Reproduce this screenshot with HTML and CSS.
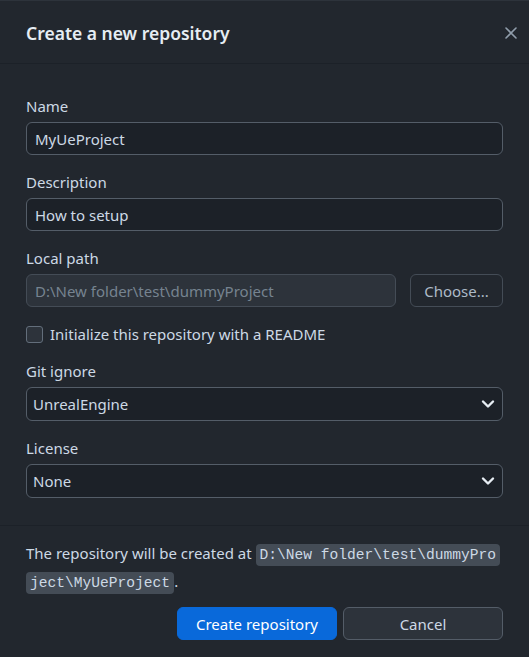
FILE: index.html
```html
<!DOCTYPE html>
<html lang="en">
<head>
  <meta charset="UTF-8" />
  <meta name="viewport" content="width=device-width, initial-scale=1.0"/>
  <title>Create a new repository</title>
  <link rel="stylesheet" href="styles.css">
</head>
<body>
  <div class="dialog">
    <div class="dialog-header">
      <h1>Create a new repository</h1>
      <button class="close" aria-label="Close">
        <svg width="12" height="12" viewBox="0 0 12 12">
          <path d="M1 1 L11 11 M11 1 L1 11" stroke="currentColor" stroke-width="1.6" stroke-linecap="round"/>
        </svg>
      </button>
    </div>

    <div class="dialog-body">
      <div class="field">
        <label for="name">Name</label>
        <input id="name" class="text-input" type="text" value="MyUeProject">
      </div>

      <div class="field">
        <label for="desc">Description</label>
        <input id="desc" class="text-input" type="text" value="How to setup">
      </div>

      <div class="field">
        <label for="path">Local path</label>
        <div class="path-row">
          <input id="path" class="text-input disabled" type="text" value="D:\New folder\test\dummyProject" disabled>
          <button class="btn choose">Choose...</button>
        </div>
      </div>

      <label class="check-row">
        <span class="checkbox"></span>
        Initialize this repository with a README
      </label>

      <div class="field">
        <label for="gitignore">Git ignore</label>
        <div class="select-wrap">
          <select id="gitignore" class="select">
            <option>UnrealEngine</option>
          </select>
          <svg class="chevron" width="14" height="10" viewBox="0 0 14 10">
            <path d="M2 2.5 L7 7.5 L12 2.5" fill="none" stroke="currentColor" stroke-width="2.4" stroke-linecap="round" stroke-linejoin="round"/>
          </svg>
        </div>
      </div>

      <div class="field">
        <label for="license">License</label>
        <div class="select-wrap">
          <select id="license" class="select">
            <option>None</option>
          </select>
          <svg class="chevron" width="14" height="10" viewBox="0 0 14 10">
            <path d="M2 2.5 L7 7.5 L12 2.5" fill="none" stroke="currentColor" stroke-width="2.4" stroke-linecap="round" stroke-linejoin="round"/>
          </svg>
        </div>
      </div>
    </div>

    <div class="dialog-footer">
      <p class="summary">The repository will be created at <code>D:\New folder\test\dummyProject\MyUeProject</code>.</p>
      <div class="actions">
        <button class="btn primary">Create repository</button>
        <button class="btn">Cancel</button>
      </div>
    </div>
  </div>
</body>
</html>
```

FILE: styles.css
```css
body {
  margin: 0;
  padding: 0;
  background-color: #22272e;
  font-family: "Noto Sans", "Open Sans", sans-serif;
  font-size: 15px;
  color: #cdd9e5;
}

.dialog {
  width: 529px;
  height: 657px;
  box-sizing: border-box;
  display: flex;
  flex-direction: column;
  background-color: #22272e;
  border-top: 1px solid #2d333b;
}

.dialog-header {
  display: flex;
  align-items: center;
  justify-content: space-between;
  padding: 2px 6px 0 26px;
  box-sizing: border-box;
  height: 67px;
  border-bottom: 1px solid #1c2128;
}

.dialog-header h1 {
  margin: 0;
  font-size: 17.5px;
  font-weight: 600;
  color: #e6edf3;
}

.close {
  width: 24px;
  height: 24px;
  padding: 0;
  border: none;
  background: none;
  color: #909dab;
  display: flex;
  align-items: center;
  justify-content: center;
}

.dialog-body {
  padding: 32px 26px 27px;
  display: flex;
  flex-direction: column;
  gap: 17px;
  border-bottom: 1px solid #1c2128;
}

.field label {
  display: block;
  line-height: 20px;
  margin-bottom: 6px;
}

.text-input,
.select {
  width: 100%;
  height: 33px;
  box-sizing: border-box;
  padding: 0 8px;
  font-family: inherit;
  font-size: 15px;
  color: #cdd9e5;
  background-color: #1c2128;
  border: 1px solid #545d68;
  border-radius: 6px;
  outline: none;
}

.text-input.disabled {
  background-color: #2d333b;
  border-color: #444c56;
  color: #768390;
}

.path-row {
  display: flex;
  gap: 14px;
}

.path-row .text-input {
  flex: 1;
}

.check-row {
  display: flex;
  align-items: center;
  gap: 7px;
  height: 20px;
}

.checkbox {
  width: 17px;
  height: 17px;
  box-sizing: border-box;
  border: 1px solid #636e7b;
  border-radius: 3px;
  background-color: #2d333b;
}

.select-wrap {
  position: relative;
}

.select {
  height: 34px;
  appearance: none;
  padding: 0 6px;
}

.chevron {
  position: absolute;
  right: 8px;
  top: 12px;
  color: #e6edf3;
  pointer-events: none;
}

.btn {
  height: 33px;
  padding: 0 12px;
  font-family: inherit;
  font-size: 15px;
  color: #cdd9e5;
  background-color: #2d333b;
  border: 1px solid #545d68;
  border-radius: 6px;
}

.btn.choose {
  width: 93px;
  background-color: #22272e;
  border-color: #444c56;
  color: #adbac7;
}

.btn.primary {
  background-color: #0969da;
  border-color: #0969da;
  color: #ffffff;
}

.dialog-footer {
  padding: 14px 26px 17px;
}

.summary {
  margin: 0 0 11px;
  line-height: 26px;
}

.summary code {
  font-family: "Liberation Mono", "DejaVu Sans Mono", monospace;
  font-size: 14.6px;
  background-color: #444c56;
  border-radius: 4px;
  padding: 3px 4px;
  word-break: break-all;
  -webkit-box-decoration-break: clone;
  box-decoration-break: clone;
}

.actions {
  display: flex;
  justify-content: flex-end;
  gap: 6px;
}

.actions .btn {
  width: 160px;
}
```
